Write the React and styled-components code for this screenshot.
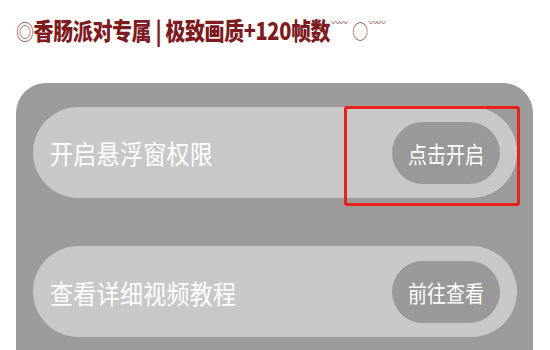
import React from "react";
import styled, { createGlobalStyle } from "styled-components";

const Global = createGlobalStyle`
  html, body { margin: 0; padding: 0; background: #ffffff; }
  body { font-family: "Noto Sans CJK SC", "Noto Sans", sans-serif; }
  #root { width: 550px; height: 350px; overflow: hidden; }
`;

const Page = styled.div`
  width: 550px;
  height: 350px;
  display: flex;
  flex-direction: column;
  overflow: hidden;
`;

const HeaderBar = styled.div`
  height: 68px;
  padding: 15px 0 0 16px;
  box-sizing: border-box;
`;

const Header = styled.h1`
  margin: 0;
  font-size: 20px;
  line-height: 26px;
  font-weight: 900;
  color: #7d1b1f;
  letter-spacing: -0.4px;
  white-space: nowrap;
  display: inline-flex;
  align-items: center;
  transform: scaleY(1.2);
  transform-origin: left top;
`;

const Ring = styled.span`
  font-weight: 400;
  font-size: ${(p) => p.$size}px;
  color: #9a4a4d;
  margin: 0 ${(p) => p.$gap}px 0 0;
`;

const Squiggle = styled.span`
  font-size: 9px;
  line-height: 8px;
  font-weight: 700;
  color: #a06a6c;
  align-self: flex-start;
  margin: 3px 5px 0 1px;
  letter-spacing: -1px;
`;

const Panel = styled.div`
  margin: 15px 17px 0 16px;
  flex: 1;
  background: #9c9a9b;
  border-radius: 30px 30px 0 0;
  padding: 24px 16px 0 17px;
  display: flex;
  flex-direction: column;
  gap: 48px;
`;

const Row = styled.div`
  position: relative;
  height: 91px;
  border-radius: 46px;
  background: #c9c8c8;
  display: flex;
  align-items: center;
  justify-content: space-between;
  padding: 0 17px 0 17px;
`;

const Label = styled.span`
  color: #ffffff;
  font-size: 23px;
  font-weight: 400;
  letter-spacing: 0.3px;
  display: inline-block;
  transform: scaleY(1.15);
`;

const Action = styled.button`
  width: 108px;
  height: 62px;
  border: none;
  border-radius: 31px;
  background: #9a9999;
  color: #ffffff;
  font-family: "Noto Sans CJK SC", "Noto Sans", sans-serif;
  font-size: 19px;
  padding: 0;
  display: flex;
  align-items: center;
  justify-content: center;
  span { display: inline-block; transform: scaleY(1.2); }
`;

const Highlight = styled.div`
  position: absolute;
  left: 311px;
  top: -1px;
  width: 176px;
  height: 100px;
  box-sizing: border-box;
  border: 3px solid #e8231e;
  border-radius: 3px;
  pointer-events: none;
`;

const rows = [
  { label: "开启悬浮窗权限", action: "点击开启", marked: true },
  { label: "查看详细视频教程", action: "前往查看", marked: false },
];

export default function App() {
  return (
    <>
      <Global />
      <Page>
        <HeaderBar>
          <Header>
            <Ring $size={18} $gap={0}>◎</Ring>
            香肠派对专属 | 极致画质+120帧数
            <Squiggle>〰〰</Squiggle>
            <Ring $size={16} $gap={0}>○</Ring>
            <Squiggle>〰〰</Squiggle>
          </Header>
        </HeaderBar>
        <Panel>
          {rows.map((r) => (
            <Row key={r.label}>
              <Label>{r.label}</Label>
              <Action>
                <span>{r.action}</span>
              </Action>
              {r.marked && <Highlight />}
            </Row>
          ))}
        </Panel>
      </Page>
    </>
  );
}
